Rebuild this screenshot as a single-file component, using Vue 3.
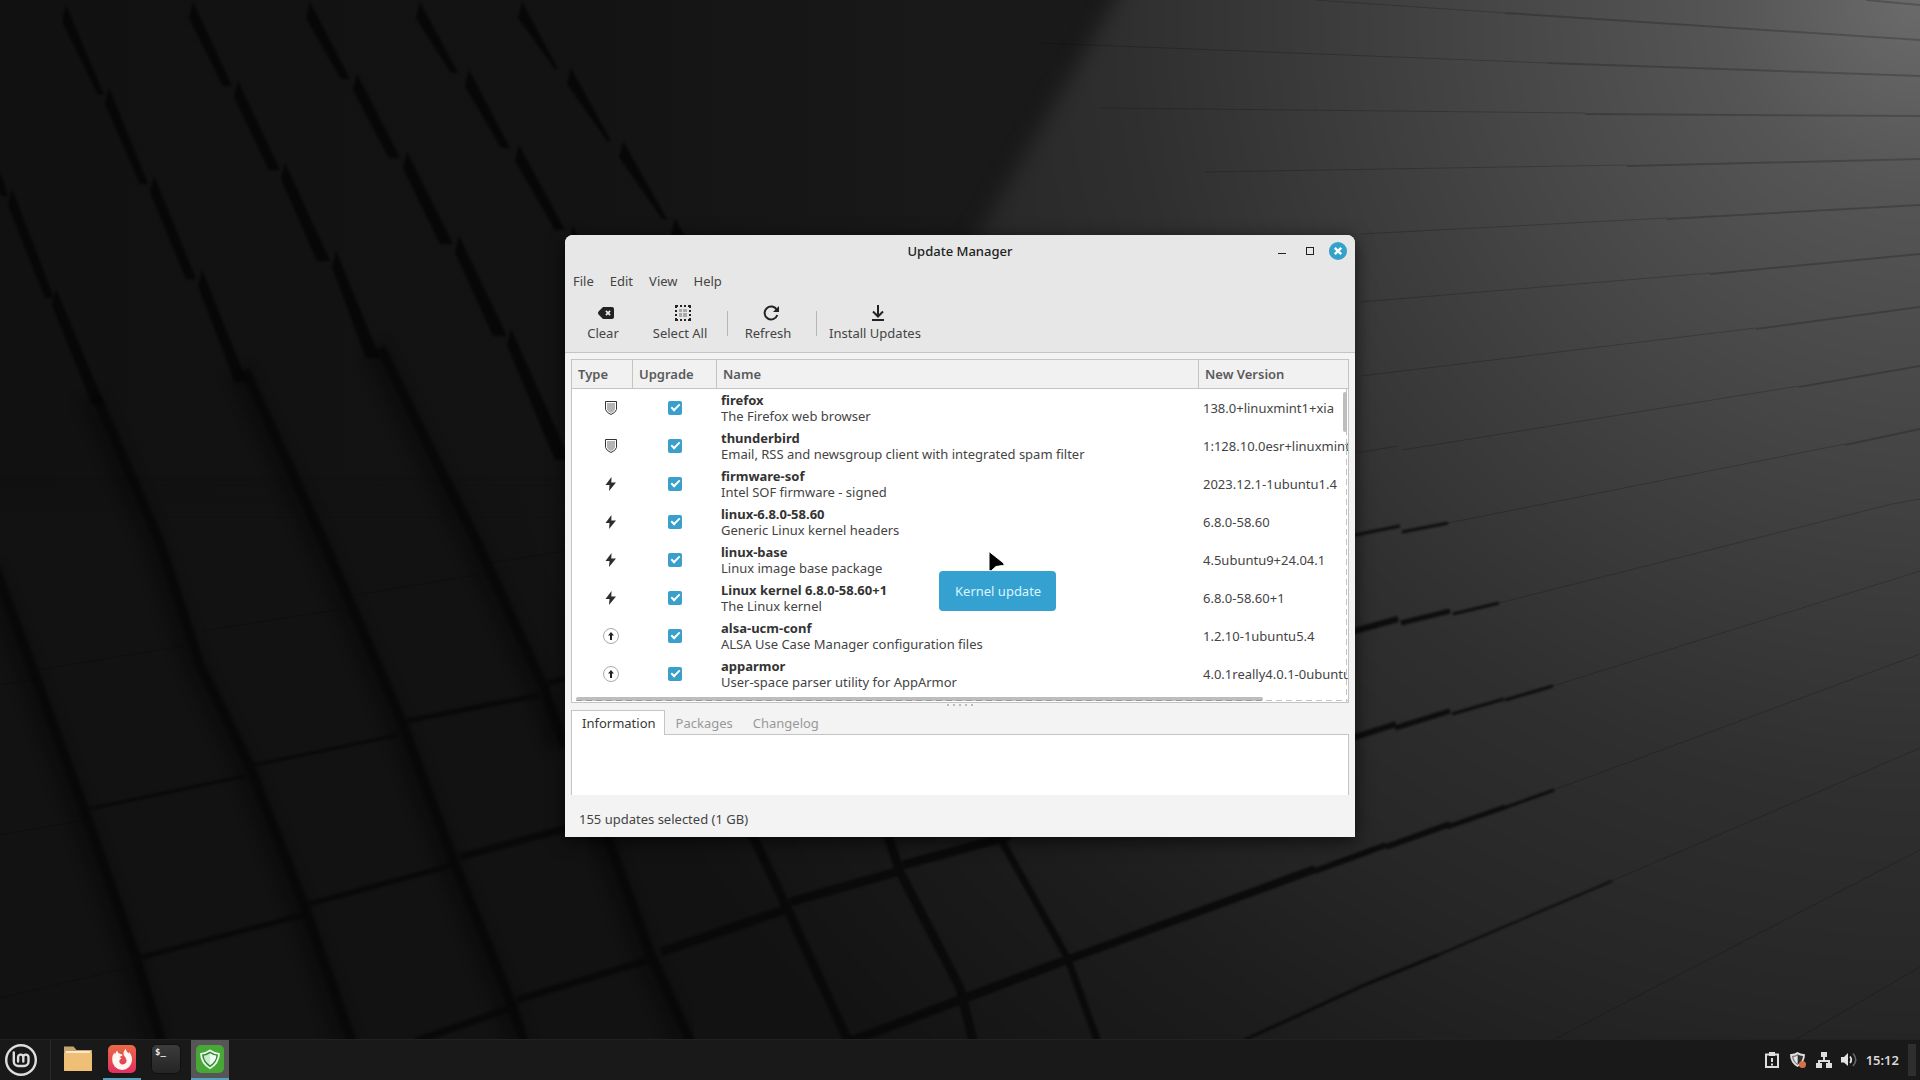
<script setup>
import { ref } from 'vue'

const menus = ['File', 'Edit', 'View', 'Help']
const tabs = ['Information', 'Packages', 'Changelog']
const activeTab = ref('Information')

const updates = ref([
  { type: 'security', name: 'firefox', desc: 'The Firefox web browser', version: '138.0+linuxmint1+xia', on: true },
  { type: 'security', name: 'thunderbird', desc: 'Email, RSS and newsgroup client with integrated spam filter', version: '1:128.10.0esr+linuxmint1', on: true },
  { type: 'kernel', name: 'firmware-sof', desc: 'Intel SOF firmware - signed', version: '2023.12.1-1ubuntu1.4', on: true },
  { type: 'kernel', name: 'linux-6.8.0-58.60', desc: 'Generic Linux kernel headers', version: '6.8.0-58.60', on: true },
  { type: 'kernel', name: 'linux-base', desc: 'Linux image base package', version: '4.5ubuntu9+24.04.1', on: true },
  { type: 'kernel', name: 'Linux kernel 6.8.0-58.60+1', desc: 'The Linux kernel', version: '6.8.0-58.60+1', on: true },
  { type: 'package', name: 'alsa-ucm-conf', desc: 'ALSA Use Case Manager configuration files', version: '1.2.10-1ubuntu5.4', on: true },
  { type: 'package', name: 'apparmor', desc: 'User-space parser utility for AppArmor', version: '4.0.1really4.0.1-0ubuntu', on: true }
])

// Wallpaper: tapered shadows between the raised tiles [x1, y1, x2, y2, width]
const strips = [
  [0, 172, 8, 196, 6], [12, 189, 54, 298, 9], [56, 289, 104, 404, 12],
  [66, 5, 104, 95, 6], [109, 88, 148, 184, 8], [154, 176, 196, 279, 10], [202, 270, 247, 382, 12],
  [193, 2, 232, 86, 9], [238, 81, 280, 170, 11], [285, 163, 330, 261, 13], [336, 251, 380, 358, 14],
  [310, 2, 350, 79, 9], [357, 74, 400, 158, 11], [407, 152, 453, 244, 13], [459, 236, 507, 336, 14], [511, 329, 570, 460, 15],
  [420, 2, 458, 73, 7], [469, 70, 510, 148, 9], [519, 145, 565, 230, 10], [573, 226, 580, 240, 8],
  [522, 2, 558, 69, 3], [571, 68, 611, 141, 4], [623, 141, 667, 219, 5], [675, 219, 690, 245, 6]
].map(([x1, y1, x2, y2, w]) => `${x1},${y1} ${x2},${y2} ${x2 - w},${y2} ${x1 - 4},${y1 + 16}`)

const valleys = [
  'M0 568L37 667L89 809L141 957L168 1045',
  'M101 396L164 540L205 665L254 764L309 905L358 1045',
  'M250 370L328 540L355 602L407 722L460 864L517 1005L530 1045',
  'M386 348L438 455L481 540L548 685L570 747',
  'M608 825L655 953L697 1045'
]
const gaps = [
  { w: 9, d: 'M750 830L787 908L850 1045' },
  { w: 9, d: 'M886 830L900 872L960 988L974 1045' },
  { w: 7, d: 'M1000 838L1067 957L1099 1045' },
  { w: 3, d: 'M89 809L245 776M254 765L398 735' },
  { w: 5, d: 'M407 721L539 695M548 683L570 678M142 957L303 915M309 904L453 865' },
  { w: 7, d: 'M460 857L575 826M416 1041L514 1007M517 1000L655 958' },
  { w: 9, d: 'M661 952L784 910M790 902L900 871M903 865L1010 836M851 1041L960 1000L1061 962' },
  { w: 8, d: 'M1061 962L1236 898L1315 869' },
  { w: 6, d: 'M1315 871L1386 845M1386 847L1450 824M1340 742L1396 724M1340 635L1398 619' },
  { w: 5, d: 'M1395 728L1450 711M1447 827L1505 807M1401 623L1450 611' },
  { w: 3, d: 'M1452 714L1504 699M1504 808L1554 790M1505 700L1553 686M1453 614L1499 603M1242 1041L1367 984L1438 955M1350 536L1400 526M1402 532L1448 523' },
  { w: 2, d: 'M1438 955L1499 929L1612 881' }
]
const seams = [
  'M37 670L184 646M202 631L349 608M355 595L481 574M490 563L570 550M0 685L37 679M0 835L85 820M0 998L135 966',
  'M1554 790L1920 654M1612 881L1920 748M1551 1041L1920 850M1793 1041L1920 967',
  'M1553 686L1920 571M1499 603L1892 504L1920 499M1448 523L1845 444',
  'M1357 453L1398 446M1402 450L1799 386M1361 376L1756 328M1361 302L1710 273M1361 234L1667 218',
  'M1205 172L1627 165M1101 108L1585 113M1040 43L1548 63M1315 0L1505 13'
].join('')
const brightSeams = [
  'M1845 445L1920 429M1799 387L1920 366M1756 329L1920 307M1710 274L1920 254M1667 219L1920 205',
  'M1627 166L1920 159M1585 114L1920 116M1548 63L1920 76M1505 13L1920 40M1866 0L1920 5'
].join('')
</script>

<template>
  <div class="desktop">
    <svg class="wallpaper" viewBox="0 0 1920 1080" preserveAspectRatio="xMidYMid slice" aria-hidden="true">
      <defs>
        <linearGradient id="base" x1="0" y1="0" x2="1920" y2="0" gradientUnits="userSpaceOnUse">
          <stop offset="0" stop-color="#111" />
          <stop offset=".3" stop-color="#131313" />
          <stop offset=".5" stop-color="#191919" />
          <stop offset="1" stop-color="#1c1c1c" />
        </linearGradient>
        <radialGradient id="glow" cx="1920" cy="0" r="1500" gradientUnits="userSpaceOnUse">
          <stop offset="0" stop-color="#6b6b6b" />
          <stop offset=".13" stop-color="#555" />
          <stop offset=".36" stop-color="#3f3f3f" />
          <stop offset=".53" stop-color="#2f2f2f" />
          <stop offset=".68" stop-color="#262626" />
          <stop offset=".8" stop-color="#1d1d1d" />
          <stop offset="1" stop-color="#121212" />
        </radialGradient>
        <filter id="soft" x="-10%" y="-10%" width="120%" height="120%" color-interpolation-filters="sRGB"><feGaussianBlur stdDeviation="10" /></filter>
        <filter id="edge" x="-10%" y="-10%" width="120%" height="120%" color-interpolation-filters="sRGB"><feGaussianBlur stdDeviation="1" /></filter>
        <filter id="deep" x="-10%" y="-10%" width="120%" height="120%" color-interpolation-filters="sRGB"><feGaussianBlur stdDeviation="6" /></filter>
      </defs>
      <rect width="1920" height="1080" fill="url(#base)" />
      <path d="M1150 -60L972 245L820 500H-60V1140H2000V-60Z" fill="url(#glow)" filter="url(#soft)" />
      <g fill="none" stroke="#050505" stroke-linejoin="round">
        <path v-for="d in valleys" :key="d" :d="d" stroke-width="24" opacity=".4" filter="url(#deep)" transform="translate(-12 0)" />
        <path v-for="d in valleys" :key="d + 'c'" :d="d" stroke-width="9" opacity=".6" filter="url(#edge)" transform="translate(-5 0)" />
      </g>
      <g fill="#050505" opacity=".8" filter="url(#edge)">
        <polygon v-for="p in strips" :key="p" :points="p" />
      </g>
      <g fill="none" stroke="#080808" opacity=".85" filter="url(#edge)">
        <path v-for="g in gaps" :key="g.d" :d="g.d" :stroke-width="g.w" />
      </g>
      <path :d="seams" fill="none" stroke="#000" stroke-opacity=".2" />
      <path :d="brightSeams" fill="none" stroke="#000" stroke-opacity=".2" stroke-width="2" />
    </svg>

    <main class="workspace">
      <section class="window" aria-label="Update Manager">
        <header class="titlebar">
          <h1>Update Manager</h1>
          <div class="controls">
            <button type="button" aria-label="Minimize"><svg width="18" height="18"><path d="M5 11.500h8" stroke="#222" /></svg></button>
            <button type="button" aria-label="Maximize"><svg width="18" height="18"><rect x="5.500" y="5.500" width="7" height="7" fill="none" stroke="#222" /></svg></button>
            <button type="button" aria-label="Close"><svg width="18" height="18"><circle cx="9" cy="9" r="9" fill="#35a2cc" /><path d="M5.800 5.800l6.400 6.400M12.200 5.800l-6.400 6.400" stroke="#fff" stroke-width="2.400" /></svg></button>
          </div>
        </header>

        <nav class="menubar">
          <button v-for="m in menus" :key="m" type="button">{{ m }}</button>
        </nav>

        <div class="toolbar" role="toolbar" aria-label="Actions">
          <button type="button">
            <svg width="16" height="16"><path fill-rule="evenodd" d="M5 2H14a2 2 0 0 1 2 2V12a2 2 0 0 1-2 2H5L1 10Q-1 8 1 6ZM7.300 6.500L8.800 8L7.300 9.500L8.500 10.700L10 9.200L11.500 10.700L12.700 9.500L11.200 8L12.700 6.500L11.500 5.300L10 6.800L8.500 5.300Z" fill="#222" /></svg>
            Clear
          </button>
          <button type="button">
            <svg width="16" height="16"><path d="M0 0H3V2H2V3H0ZM5 0H7V2H5ZM9 0H11V2H9ZM13 0H16V3H14V2H13ZM0 5H2V7H0ZM0 9H2V11H0ZM14 5H16V7H14ZM14 9H16V11H14ZM0 13H2V14H3V16H0ZM5 14H7V16H5ZM9 14H11V16H9ZM13 14H14V13H16V16H13Z" fill="#222" /><path d="M4 4H7V7H4ZM8 4H12V7H8ZM4 8H7V12H4ZM8 8H12V12H8Z" fill="#aaa" /></svg>
            Select All
          </button>
          <span class="sep"></span>
          <button type="button">
            <svg width="16" height="16"><path d="M13.900 5A6.500 6.500 0 1 0 14.300 10" fill="none" stroke="#222" stroke-width="2" /><path d="M16 1V7H10Z" fill="#222" /></svg>
            Refresh
          </button>
          <span class="sep"></span>
          <button type="button">
            <svg width="16" height="16"><path d="M8 0V11M3 6.500L8 11.500L13 6.500M2 15H14" fill="none" stroke="#222" stroke-width="2" /></svg>
            Install Updates
          </button>
        </div>

        <div class="content">
          <div class="list">
            <table>
              <colgroup><col class="c-type" /><col class="c-upgrade" /><col class="c-name" /><col /></colgroup>
              <thead>
                <tr><th>Type</th><th>Upgrade</th><th>Name</th><th>New Version</th></tr>
              </thead>
              <tbody>
                <tr v-for="u in updates" :key="u.name">
                  <td class="type">
                    <svg v-if="u.type === 'security'" width="16" height="16" role="img" aria-label="Security update"><path d="M2.500 1.500H13.500V9.500Q12.500 12.800 8 14.500Q3.500 12.800 2.500 9.500Z" fill="#fff" stroke="#333" /><path d="M4 3H12V9.500Q11 11.800 8 13Q5 11.800 4 9.500Z" fill="#b4b4b4" /></svg>
                    <svg v-else-if="u.type === 'kernel'" width="16" height="16" role="img" aria-label="Kernel update"><path d="M8.500 1L2.500 9H6.500L6 15L13 6.500H8.300Z" fill="#2d2d2d" /></svg>
                    <svg v-else width="16" height="16" role="img" aria-label="Package update"><circle cx="8" cy="8" r="7.500" fill="#fff" stroke="#aaa" /><path d="M8 4L11 7.500H9V12H7V7.500H5Z" fill="#222" /></svg>
                  </td>
                  <td class="upgrade"><input v-model="u.on" type="checkbox" :aria-label="'Upgrade ' + u.name" /></td>
                  <td class="name"><b>{{ u.name }}</b><span>{{ u.desc }}</span></td>
                  <td class="version">{{ u.version }}</td>
                </tr>
              </tbody>
            </table>
            <i class="vbar"></i>
            <i class="hbar"></i>
          </div>

          <div class="handle"><i v-for="n in 5" :key="n"></i></div>

          <div class="tabs" role="tablist">
            <button
              v-for="t in tabs"
              :key="t"
              type="button"
              role="tab"
              :aria-selected="t === activeTab"
              :class="{ active: t === activeTab }"
              @click="activeTab = t"
            >{{ t }}</button>
          </div>
          <div class="page" role="tabpanel"></div>
        </div>

        <footer class="status">155 updates selected (1 GB)</footer>

        <div class="tooltip" role="tooltip">Kernel update</div>
        <svg class="cursor" width="20" height="24" aria-hidden="true"><path d="M2 1.500V19.500Q2.500 22 4.500 20.500L9 16.500L15.500 15.500Q18.500 15 16.500 13Z" fill="#000" stroke="#fff" stroke-linejoin="round" /></svg>
      </section>
    </main>

    <footer class="panel">
      <button type="button" class="start" aria-label="Menu">
        <svg width="32" height="32" fill="none" stroke="#dedede"><circle cx="16" cy="16" r="14.800" stroke-width="2.400" /><path d="M8.800 8.500V17.500a4.500 4.500 0 0 0 4.500 4.500H19a4.500 4.500 0 0 0 4.500-4.500V13.200a2.600 2.600 0 0 0-5.200 0V17.500M18.300 13.200a2.600 2.600 0 0 0-5.200 0V17.500" stroke-width="2.400" stroke-linecap="round" /></svg>
      </button>
      <div class="apps">
        <button type="button" aria-label="Files">
          <svg width="28" height="28"><path d="M0 1.500H9.500L12.500 5H28V15H0Z" fill="#c5a56c" /><path d="M1.500 6H26.500V12H1.500Z" fill="#fbe9cf" /><path d="M0 8H28V25.500Q28 26 27 26H1Q0 26 0 25.500Z" fill="#eebf74" /></svg>
        </button>
        <button type="button" class="open" aria-label="Firefox">
          <svg width="28" height="28">
            <defs><linearGradient id="ff" x1="0" y1="0" x2="0" y2="1"><stop offset="0" stop-color="#ea6a45" /><stop offset="1" stop-color="#e42e62" /></linearGradient></defs>
            <rect width="28" height="28" rx="5" fill="url(#ff)" />
            <path d="M14 25A10 10 0 0 1 4.200 14.500Q4 10.500 6.300 7.500L7 9.300L9 5.500Q9.700 8.500 12.500 9Q14.500 9.300 14.600 10.500Q12.500 11 11.500 12.200Q12.800 12.500 13.500 13.500Q11.500 14 11.300 16Q11.500 19.300 14.800 19.400Q18.300 19.200 18.600 15.800Q18.500 13.400 16.600 11.300Q14 8 17.600 3.700Q18.200 6.500 20.500 8.500L21 7Q24.300 10.500 24 15.500Q22.800 24.300 14 25Z" fill="#fff8f2" />
          </svg>
        </button>
        <button type="button" aria-label="Terminal">
          <svg width="30" height="30">
            <defs><linearGradient id="tm" x1="0" y1="0" x2="0" y2="1"><stop offset="0" stop-color="#3c3c3c" /><stop offset="1" stop-color="#242424" /></linearGradient></defs>
            <rect x=".5" y=".5" width="29" height="29" rx="5" fill="url(#tm)" stroke="#101010" />
            <text x="4" y="11" class="prompt">$_</text>
          </svg>
        </button>
        <button type="button" class="open active" aria-label="Update Manager">
          <svg width="28" height="28">
            <rect width="28" height="28" rx="5" fill="#48a836" />
            <path d="M14 4.500Q18 7.300 24 8.200Q23.600 19 14 24.300Q4.400 19 4 8.200Q10 7.300 14 4.500Z" fill="#e9f8e9" />
            <path d="M14 6.500Q17.500 9 22 9.600Q21.300 17.800 14 22.200Q6.700 17.800 6 9.600Q10.500 9 14 6.500Z" fill="#2d8a2f" />
            <path d="M14 8.200Q17 10.200 20.300 10.800Q19.500 16.800 14 20.300Q8.500 16.800 7.700 10.800Q11 10.200 14 8.200Z" fill="#c9ebcb" />
            <path d="M14 8.200Q17 10.200 20.300 10.800Q19.500 16.800 14 20.300Z" fill="#f0fbf0" />
          </svg>
        </button>
      </div>
      <div class="tray">
        <svg width="16" height="18" role="img" aria-label="Report"><path d="M2 3.500H14V16H2Z" fill="none" stroke="#dedede" stroke-width="2" /><path d="M5 1H11V5H5Z" fill="#dedede" /><path d="M7 7H9V11H7ZM7 12.500H9V14.500H7Z" fill="#dedede" /></svg>
        <svg width="18" height="18" role="img" aria-label="Updates available"><path d="M8.500 1Q11 3 16 3.300Q16 12 8.500 16Q1 12 1 3.300Q6 3 8.500 1Z" fill="#dedede" /><path d="M8.500 3.200Q6.500 4.800 3 5Q3.500 10.800 8.500 14Z" fill="#777" /><path d="M8.500 3.200Q10.500 4.800 14 5Q13.500 10.800 8.500 14Z" fill="#333" /><path d="M8.500 4.500Q7 5.700 4.500 6Q5 10.300 8.500 12.700Z" fill="#e5e5e5" /><circle cx="13.500" cy="13.500" r="3.500" fill="#d9704a" /></svg>
        <svg width="16" height="18" role="img" aria-label="Network"><path d="M5 1H11V6H9V9H14V12H16V17H10V12H12V11H4V12H6V17H0V12H2V9H7V6H5Z" fill="#dedede" /></svg>
        <svg width="16" height="18" role="img" aria-label="Volume"><path d="M0 6H3L7 2V15L3 11.500H0Z" fill="#e4e4e4" /><path d="M9 5.500Q11.500 8.700 9 12" fill="none" stroke="#e4e4e4" stroke-width="1.800" /><path d="M12 2.500Q17.500 8.700 12 15" fill="none" stroke="#666" stroke-width="1.600" /></svg>
        <time>15:12</time>
        <i class="corner"></i>
      </div>
    </footer>
  </div>
</template>

<style>
body {
  margin: 0;
  background: #111;
}
</style>

<style scoped>
.desktop {
  position: relative;
  display: flex;
  flex-direction: column;
  min-height: 100vh;
  overflow: hidden;
  font: 13px/16px "Noto Sans", sans-serif;
  color: #444;
}
.desktop *,
.desktop *::before {
  box-sizing: border-box;
}
.wallpaper {
  position: absolute;
  inset: 0;
  width: 100%;
  height: 100%;
}
button {
  margin: 0;
  padding: 0;
  border: 0;
  background: none;
  font: inherit;
  color: inherit;
}
svg {
  display: block;
}
.workspace {
  position: relative;
  flex: 1;
  display: flex;
  justify-content: center;
  align-items: flex-start;
  padding: 235px 0 40px;
}
.window {
  position: relative;
  width: 790px;
  max-width: 100%;
  border-radius: 8px 8px 0 0;
  background: #f3f3f3;
  box-shadow: 0 4px 18px rgba(0, 0, 0, 0.65);
}

.titlebar {
  display: grid;
  grid-template-columns: 1fr auto 1fr;
  align-items: center;
  height: 32px;
  padding: 0 8px;
  border-radius: 8px 8px 0 0;
  background: #e7e7e7;
}
.titlebar h1 {
  grid-column: 2;
  margin: 0;
  font-size: 13px;
  font-weight: 500;
  color: #222;
}
.controls {
  display: flex;
  justify-content: flex-end;
  gap: 10px;
}
.menubar {
  display: flex;
  gap: 16px;
  height: 28px;
  padding: 0 8px;
  background: #e7e7e7;
}
.toolbar {
  display: grid;
  grid-template-columns: 66px 88px 7px 74px 22px 96px;
  height: 58px;
  padding: 10px 5px 9px;
  border-bottom: 1px solid #c4c4c4;
  background: #e7e7e7;
}
.toolbar button {
  display: flex;
  flex-direction: column;
  align-items: center;
  gap: 4px;
  white-space: nowrap;
}
.toolbar button svg {
  margin-left: 5px;
}
.sep {
  justify-self: center;
  width: 1px;
  height: 25px;
  margin-top: 6px;
  background: #b5b5b5;
}

.content {
  padding: 6px 6px 0;
}
.list {
  position: relative;
  height: 344px;
  border: 1px solid #c4c4c4;
  background: #fff;
  overflow: hidden;
}
table {
  width: 100%;
  table-layout: fixed;
  border-collapse: separate;
  border-spacing: 0;
}
.c-type {
  width: 61px;
}
.c-upgrade {
  width: 84px;
}
.c-name {
  width: 482px;
}
th {
  height: 29px;
  padding: 0 6px;
  border-bottom: 1px solid #c4c4c4;
  border-right: 1px solid #c4c4c4;
  background: #f1f1f1;
  text-align: left;
  font-weight: 600;
  color: #5a5a5a;
}
th:last-child {
  border-right: 0;
}
td {
  height: 38px;
  padding: 0;
  white-space: nowrap;
}
.type {
  padding-left: 31px;
}
.upgrade {
  padding-left: 35px;
}
.upgrade input {
  appearance: none;
  display: block;
  width: 14px;
  height: 14px;
  margin: 0;
  border-radius: 2px;
  background: #3a9fcb;
}
.upgrade input:checked::before {
  content: "";
  display: block;
  width: 9px;
  height: 5px;
  margin: 3px 0 0 3px;
  border: solid #fff;
  border-width: 0 0 2px 2px;
  transform: rotate(-45deg);
}
.name,
.version {
  padding-left: 4px;
}
.name b,
.name span {
  display: block;
}
.name b {
  font-weight: 700;
  color: #333;
}
.vbar,
.hbar {
  position: absolute;
}
.vbar {
  top: 29px;
  right: 1px;
  bottom: 0;
  width: 4px;
  background: repeating-linear-gradient(#c4c4c4 0 6px, transparent 6px 10px) right / 1px 100% no-repeat;
}
.vbar::before {
  content: "";
  display: block;
  width: 4px;
  height: 40px;
  margin-top: 3px;
  border-radius: 2px;
  background: #bdbdbd;
}
.hbar {
  left: 4px;
  right: 0;
  bottom: 1px;
  height: 4px;
  background: repeating-linear-gradient(90deg, #c4c4c4 0 6px, transparent 6px 10px) bottom / 100% 1px no-repeat;
}
.hbar::before {
  content: "";
  display: block;
  width: 89%;
  height: 4px;
  border-radius: 2px;
  background: repeating-linear-gradient(90deg, #999 0 6px, #c4c4c4 6px 10px) bottom / 100% 1px no-repeat #bdbdbd;
}
.handle {
  display: flex;
  justify-content: center;
  gap: 4px;
  height: 7px;
  padding-top: 1px;
}
.handle i {
  width: 2px;
  height: 2px;
  background: #bbb;
}
.tabs {
  position: relative;
  display: flex;
  height: 25px;
}
.tabs button {
  padding: 0 8px 0 10px;
  border: 1px solid transparent;
  border-bottom: 0;
  color: #999;
}
.tabs .active {
  border-color: #c4c4c4;
  background: #fff;
  color: #3a3a3a;
}
.page {
  height: 61px;
  margin-top: -1px;
  border: 1px solid #c4c4c4;
  border-bottom: 0;
  background: #fff;
}
.status {
  padding: 16px 14px 10px;
}

.tooltip {
  position: absolute;
  left: 374px;
  top: 336px;
  padding: 12px 15px 12px 16px;
  border-radius: 4px;
  background: #34a1d0;
  color: #daf5ff;
  white-space: nowrap;
}
.cursor {
  position: absolute;
  left: 422px;
  top: 315px;
}

.panel {
  position: relative;
  display: flex;
  align-items: stretch;
  height: 41px;
  border-top: 1px solid #222;
  background: #191919;
}
.start {
  width: 51px;
  padding-left: 5px;
  border-right: 1px solid #292929;
}
.apps {
  display: flex;
  gap: 6px;
  padding-left: 8px;
}
.apps button {
  display: flex;
  justify-content: center;
  align-items: center;
  width: 38px;
  border-bottom: 2px solid transparent;
}
.apps .open {
  border-bottom-color: #5a9fbe;
}
.apps .active {
  background-color: #565656;
}
.prompt {
  font: bold 9px "DejaVu Sans Mono", monospace;
  fill: #eee;
}
.tray {
  display: flex;
  align-items: center;
  gap: 9px;
  margin-left: auto;
  padding-right: 4px;
}
.tray time {
  font-weight: 600;
  color: #d8d8d8;
}
.corner {
  width: 8px;
  height: 32px;
  background: #2e2e2e;
}
</style>
